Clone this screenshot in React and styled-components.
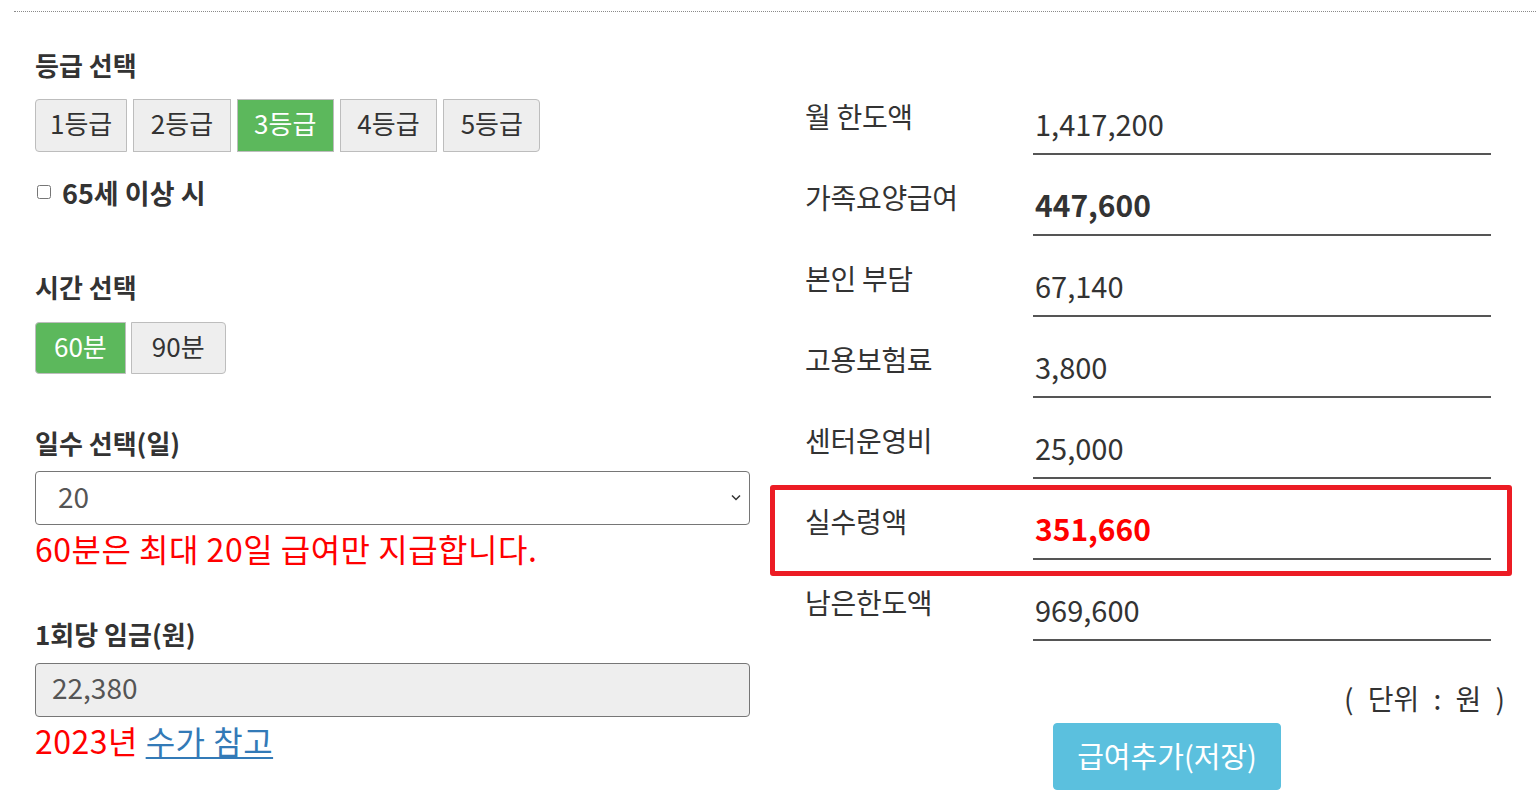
import React from "react";
import styled, { createGlobalStyle } from "styled-components";

const Global = createGlobalStyle`
  html, body { margin: 0; padding: 0; background: #fff; }
  body { font-family: "Noto Sans CJK KR", "Noto Sans", sans-serif; color: #333; }
  *, *::before, *::after { box-sizing: border-box; }
`;

const Frame = styled.div`
  margin: 11px 0 0 14px;
  border-top: 1px dotted #8a8a8a;
  display: flex;
  align-items: flex-start;
  padding-left: 21px;
`;

const LeftCol = styled.div`
  width: 715px;
  display: flex;
  flex-direction: column;
  padding-top: 38px;
`;

const Heading = styled.div`
  font-size: 26px;
  font-weight: 700;
  line-height: 30px;
  height: 30px;
  color: #333;
  white-space: nowrap;
  margin-top: ${(p) => p.$mt || 0}px;
`;

const BtnRow = styled.div`
  display: flex;
  gap: ${(p) => p.$gap || 5}px;
  margin-top: ${(p) => p.$mt || 0}px;
`;

const ToggleBtn = styled.button`
  font-family: inherit;
  height: ${(p) => p.$h || 53}px;
  padding: 0 ${(p) => p.$px || 16}px 5px;
  font-size: 26px;
  line-height: 1;
  border: 1px solid #bdbdbd;
  background: ${(p) => (p.$active ? "#5cb85c" : "#eeeeee")};
  color: ${(p) => (p.$active ? "#fff" : "#333")};
  border-radius: 0;
  &:first-child { border-radius: 4px 0 0 4px; }
  &:last-child { border-radius: 0 4px 4px 0; }
  cursor: pointer;
`;

const CheckRow = styled.label`
  display: flex;
  align-items: center;
  height: 30px;
  margin-top: 25px;
  font-size: 27px;
  font-weight: 700;
  color: #333;
  white-space: nowrap;
  input {
    width: 14px;
    height: 14px;
    margin: 0 11px 0 2px;
  }
`;

const SelectWrap = styled.div`
  position: relative;
  margin-top: 13px;
  height: 54px;
`;

const Select = styled.select`
  appearance: none;
  width: 100%;
  height: 54px;
  border: 1px solid #767676;
  border-radius: 4px;
  background: #fff;
  font-family: inherit;
  font-size: 28px;
  color: #555;
  padding: 0 0 4px 22px;
  outline: none;
`;

const Chevron = styled.svg`
  position: absolute;
  right: 9px;
  top: 23px;
  pointer-events: none;
`;

const ReadInput = styled.input`
  margin-top: 14px;
  width: 100%;
  height: 54px;
  border: 1px solid #767676;
  border-radius: 4px;
  background: #eeeeee;
  font-family: inherit;
  font-size: 28px;
  color: #555;
  padding: 0 0 6px 16px;
  outline: none;
`;

const Note = styled.div`
  margin-top: 6px;
  font-size: 32px;
  line-height: 34px;
  height: 34px;
  letter-spacing: 0.5px;
  color: #ff0000;
  white-space: nowrap;
  a {
    color: #337ab7;
    text-decoration: underline;
    text-decoration-thickness: 2px;
    text-underline-offset: 3px;
  }
`;

const RightCol = styled.div`
  margin-left: 20px;
  width: 742px;
  padding-top: 68px;
  display: flex;
  flex-direction: column;
`;

const Row = styled.div`
  position: relative;
  display: flex;
  align-items: flex-start;
  height: 81px;
  padding: 0 21px 0 35px;
  ${(p) =>
    p.$highlight &&
    `
    &::after {
      content: "";
      position: absolute;
      left: 0;
      right: 0;
      top: 0;
      height: 91px;
      border: 5px solid #ec1c24;
      border-radius: 3px;
      pointer-events: none;
    }
  `}
`;

const Label = styled.div`
  width: 228px;
  margin-top: 21px;
  font-size: 28px;
  line-height: 30px;
  letter-spacing: -0.3px;
  color: #333;
  white-space: nowrap;
`;

const Value = styled.div`
  width: 458px;
  height: 75px;
  padding: 28px 0 0 2px;
  border-bottom: 2px solid #555;
  font-size: ${(p) => (p.$bold ? 30 : 29)}px;
  font-weight: ${(p) => (p.$bold ? 700 : 400)};
  line-height: 30px;
  color: ${(p) => p.$color || "#333"};
`;

const Unit = styled.div`
  margin-top: 36px;
  align-self: flex-end;
  padding-right: 7px;
  font-size: 28px;
  line-height: 30px;
  word-spacing: 8px;
  color: #333;
  white-space: pre;
`;

const SaveBtn = styled.button`
  margin: 10px 0 0 283px;
  width: 228px;
  height: 67px;
  padding: 0 0 4px;
  border: 1px solid #5bc0de;
  border-radius: 4px;
  background: #5bc0de;
  color: #fff;
  font-family: inherit;
  font-size: 29px;
  cursor: pointer;
`;

const grades = ["1등급", "2등급", "3등급", "4등급", "5등급"];
const rows = [
  { label: "월 한도액", value: "1,417,200" },
  { label: "가족요양급여", value: "447,600", bold: true },
  { label: "본인 부담", value: "67,140" },
  { label: "고용보험료", value: "3,800" },
  { label: "센터운영비", value: "25,000" },
  { label: "실수령액", value: "351,660", bold: true, color: "#ff0000", highlight: true },
  { label: "남은한도액", value: "969,600" },
];

export default function App() {
  return (
    <>
      <Global />
      <Frame>
        <LeftCol>
          <Heading>등급 선택</Heading>
          <BtnRow $mt={19} $gap={6}>
            {grades.map((g) => (
              <ToggleBtn key={g} $active={g === "3등급"} $px={g === "1등급" ? 14 : 16.5}>
                {g}
              </ToggleBtn>
            ))}
          </BtnRow>
          <CheckRow>
            <input type="checkbox" />
            65세 이상 시
          </CheckRow>
          <Heading $mt={65}>시간 선택</Heading>
          <BtnRow $mt={20}>
            <ToggleBtn $h={52} $px={18} $active>60분</ToggleBtn>
            <ToggleBtn $h={52} $px={20}>90분</ToggleBtn>
          </BtnRow>
          <Heading $mt={54}>일수 선택(일)</Heading>
          <SelectWrap>
            <Select defaultValue="20">
              <option value="20">20</option>
            </Select>
            <Chevron width="10" height="7" viewBox="0 0 10 7">
              <path d="M1 1.5 L5 5.5 L9 1.5" fill="none" stroke="#333" strokeWidth="1.5" />
            </Chevron>
          </SelectWrap>
          <Note>60분은 최대 20일 급여만 지급합니다.</Note>
          <Heading $mt={54}>1회당 임금(원)</Heading>
          <ReadInput readOnly value="22,380" />
          <Note>
            2023년 <a href="#">수가 참고</a>
          </Note>
        </LeftCol>
        <RightCol>
          {rows.map((r) => (
            <Row key={r.label} $highlight={r.highlight}>
              <Label>{r.label}</Label>
              <Value $bold={r.bold} $color={r.color}>
                {r.value}
              </Value>
            </Row>
          ))}
          <Unit>( 단위 : 원 )</Unit>
          <SaveBtn>급여추가(저장)</SaveBtn>
        </RightCol>
      </Frame>
    </>
  );
}
